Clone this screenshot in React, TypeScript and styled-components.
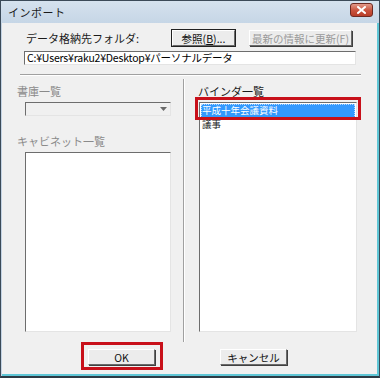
import React from "react";
import styled, { createGlobalStyle, css } from "styled-components";

const Global = createGlobalStyle`
  html, body { margin: 0; padding: 0; background: #ffffff; }
  body { font-family: "Noto Sans CJK JP", "Noto Sans", sans-serif; font-size: 11px; }
  * { box-sizing: border-box; }
`;

const Window = styled.div`
  width: 380px;
  height: 378px;
  display: flex;
  flex-direction: column;
  background: #c3d3e4;
  border: 1px solid #3b4a58;
  border-bottom: 2px solid #2d3a44;
  position: relative;
`;

const TitleBar = styled.div`
  height: 22px;
  display: flex;
  align-items: center;
  padding: 0 6px 0 7px;
  background: linear-gradient(#d5e2ee, #c6d6e6);
  color: #1a1a1a;
  font-size: 11px;
  letter-spacing: 0.5px;
`;

const Title = styled.span`
  flex: 1;
`;

const CloseBtn = styled.div`
  width: 23px;
  height: 14px;
  border-radius: 3px;
  border: 1px solid #6e2a22;
  background: linear-gradient(#e29a8a, #c9523c 55%, #b83d28);
  display: flex;
  align-items: center;
  justify-content: center;
  margin-top: -4px;
`;

const Body = styled.div`
  flex: 1;
  margin: 0 0 0 1px;
  background: #f0f0f0;
  border-bottom: 2px solid #5fc6d6;
  border-right: 2px solid #5fc6d6;
  display: flex;
  flex-direction: column;
  padding: 7px 0 0 1px;
`;

const TopRow = styled.div`
  display: flex;
  align-items: center;
  height: 16px;
  padding-left: 23px;
`;

const Label = styled.span<{ $disabled?: boolean }>`
  color: ${(p) => (p.$disabled ? "#8a8a8a" : "#1a1a1a")};
  font-size: 11px;
  line-height: 12px;
  white-space: nowrap;
`;

const Button = styled.div<{ $w: number; $disabled?: boolean; $focus?: boolean }>`
  height: 16px;
  display: flex;
  align-items: center;
  justify-content: center;
  background: #ececec;
  border-top: 1px solid #ffffff;
  border-left: 1px solid #ffffff;
  border-right: 1px solid #6a6a6a;
  border-bottom: 1px solid #6a6a6a;
  box-shadow: 1px 1px 0 #404040;
  font-size: 10.5px;
  white-space: nowrap;
  width: ${(p) => p.$w}px;
  color: ${(p) => (p.$disabled ? "#9a9a9a" : "#111")};
  ${(p) =>
    p.$focus &&
    css`
      outline: 1px solid #222;
    `}
`;

const Spacer = styled.div<{ $w: number }>`
  width: ${(p) => p.$w}px;
`;

const TextBox = styled.div`
  margin: 5px 0 0 21px;
  width: 332px;
  height: 14px;
  background: #fff;
  border-top: 1px solid #6d6d6d;
  border-left: 1px solid #6d6d6d;
  border-right: 1px solid #e4e4e4;
  border-bottom: 1px solid #e4e4e4;
  font-size: 10.5px;
  line-height: 12px;
  padding-left: 2px;
  letter-spacing: -0.2px;
  white-space: nowrap;
  overflow: hidden;
`;

const HSep = styled.div`
  margin: 9px 0 0 17px;
  width: 341px;
  height: 2px;
  border-top: 1px solid #a0a0a0;
  border-bottom: 1px solid #ffffff;
`;

const Columns = styled.div`
  display: flex;
  height: 263px;
  margin-top: 3px;
`;

const Column = styled.div<{ $w: number; $pl: number }>`
  width: ${(p) => p.$w}px;
  padding-left: ${(p) => p.$pl}px;
  display: flex;
  flex-direction: column;
`;

const ColLabel = styled(Label)<{ $mt?: number }>`
  display: block;
  margin-top: ${(p) => p.$mt ?? 6}px;
  height: 12px;
`;

const VSep = styled.div`
  width: 2px;
  border-left: 1px solid #a0a0a0;
  border-right: 1px solid #ffffff;
`;

const Combo = styled.div`
  margin: 5px 0 0 8px;
  width: 146px;
  height: 14px;
  background: #f0f0f0;
  border-top: 1px solid #6d6d6d;
  border-left: 1px solid #6d6d6d;
  border-right: 1px solid #e4e4e4;
  border-bottom: 1px solid #e4e4e4;
  display: flex;
  justify-content: flex-end;
  align-items: center;
  padding-right: 3px;
`;

const ListBox = styled.div<{ $w: number; $h: number; $ml: number; $mt: number }>`
  margin: ${(p) => p.$mt}px 0 0 ${(p) => p.$ml}px;
  width: ${(p) => p.$w}px;
  height: ${(p) => p.$h}px;
  background: #fff;
  border-top: 1px solid #6d6d6d;
  border-left: 1px solid #6d6d6d;
  border-right: 1px solid #e4e4e4;
  border-bottom: 1px solid #e4e4e4;
  padding: 1px;
  position: relative;
`;

const ListItem = styled.div<{ $selected?: boolean }>`
  height: 14px;
  line-height: 12px;
  font-size: 9.5px;
  padding-left: 1px;
  white-space: nowrap;
  color: ${(p) => (p.$selected ? "#fff" : "#1a1a1a")};
  background: ${(p) => (p.$selected ? "#3399ff" : "transparent")};
  outline: ${(p) => (p.$selected ? "1px dotted #b5d9ff" : "none")};
  outline-offset: -1px;
`;

const Highlight = styled.div<{ $l: number; $t: number; $w: number; $h: number }>`
  position: absolute;
  left: ${(p) => p.$l}px;
  top: ${(p) => p.$t}px;
  width: ${(p) => p.$w}px;
  height: ${(p) => p.$h}px;
  border: 3px solid #c8101a;
  pointer-events: none;
`;

const Footer = styled.div`
  display: flex;
  align-items: center;
  margin-top: 7px;
  padding-left: 85px;
  gap: 65px;
`;

const FooterBtn = styled.div`
  position: relative;
`;

export default function App() {
  return (
    <>
      <Global />
      <Window>
        <TitleBar>
          <Title>インポート</Title>
          <CloseBtn>
            <svg width="9" height="8" viewBox="0 0 9 8">
              <path d="M1 1 L8 7 M8 1 L1 7" stroke="#ffffff" strokeWidth="2" strokeLinecap="square" />
            </svg>
          </CloseBtn>
        </TitleBar>
        <Body>
          <TopRow>
            <Label style={{ width: 146 }}>データ格納先フォルダ:</Label>
            <Button $w={63} $focus>
              参照(<u>B</u>)...
            </Button>
            <Spacer $w={14} />
            <Button $w={103} $disabled>
              最新の情報に更新(F)
            </Button>
          </TopRow>
          <TextBox>C:¥Users¥raku2¥Desktop¥パーソナルデータ</TextBox>
          <HSep />
          <Columns>
            <Column $w={180} $pl={14}>
              <ColLabel $disabled>書庫一覧</ColLabel>
              <Combo>
                <svg width="7" height="4" viewBox="0 0 7 4">
                  <path d="M0 0 H7 L3.5 4 Z" fill="#6a6a6a" />
                </svg>
              </Combo>
              <ColLabel $disabled $mt={19}>キャビネット一覧</ColLabel>
              <ListBox $w={146} $h={180} $ml={8} $mt={5} />
            </Column>
            <VSep />
            <Column $w={190} $pl={13}>
              <ColLabel>バインダ一覧</ColLabel>
              <ListBox $w={158} $h={230} $ml={1} $mt={5}>
                <ListItem $selected>平成十年会議資料</ListItem>
                <ListItem>議事</ListItem>
                <Highlight $l={-5} $t={-6} $w={166} $h={23} />
              </ListBox>
            </Column>
          </Columns>
          <Footer>
            <FooterBtn>
              <Button $w={67}>OK</Button>
              <Highlight $l={-7} $t={-7} $w={82} $h={28} />
            </FooterBtn>
            <Button $w={67}>キャンセル</Button>
          </Footer>
        </Body>
      </Window>
    </>
  );
}
